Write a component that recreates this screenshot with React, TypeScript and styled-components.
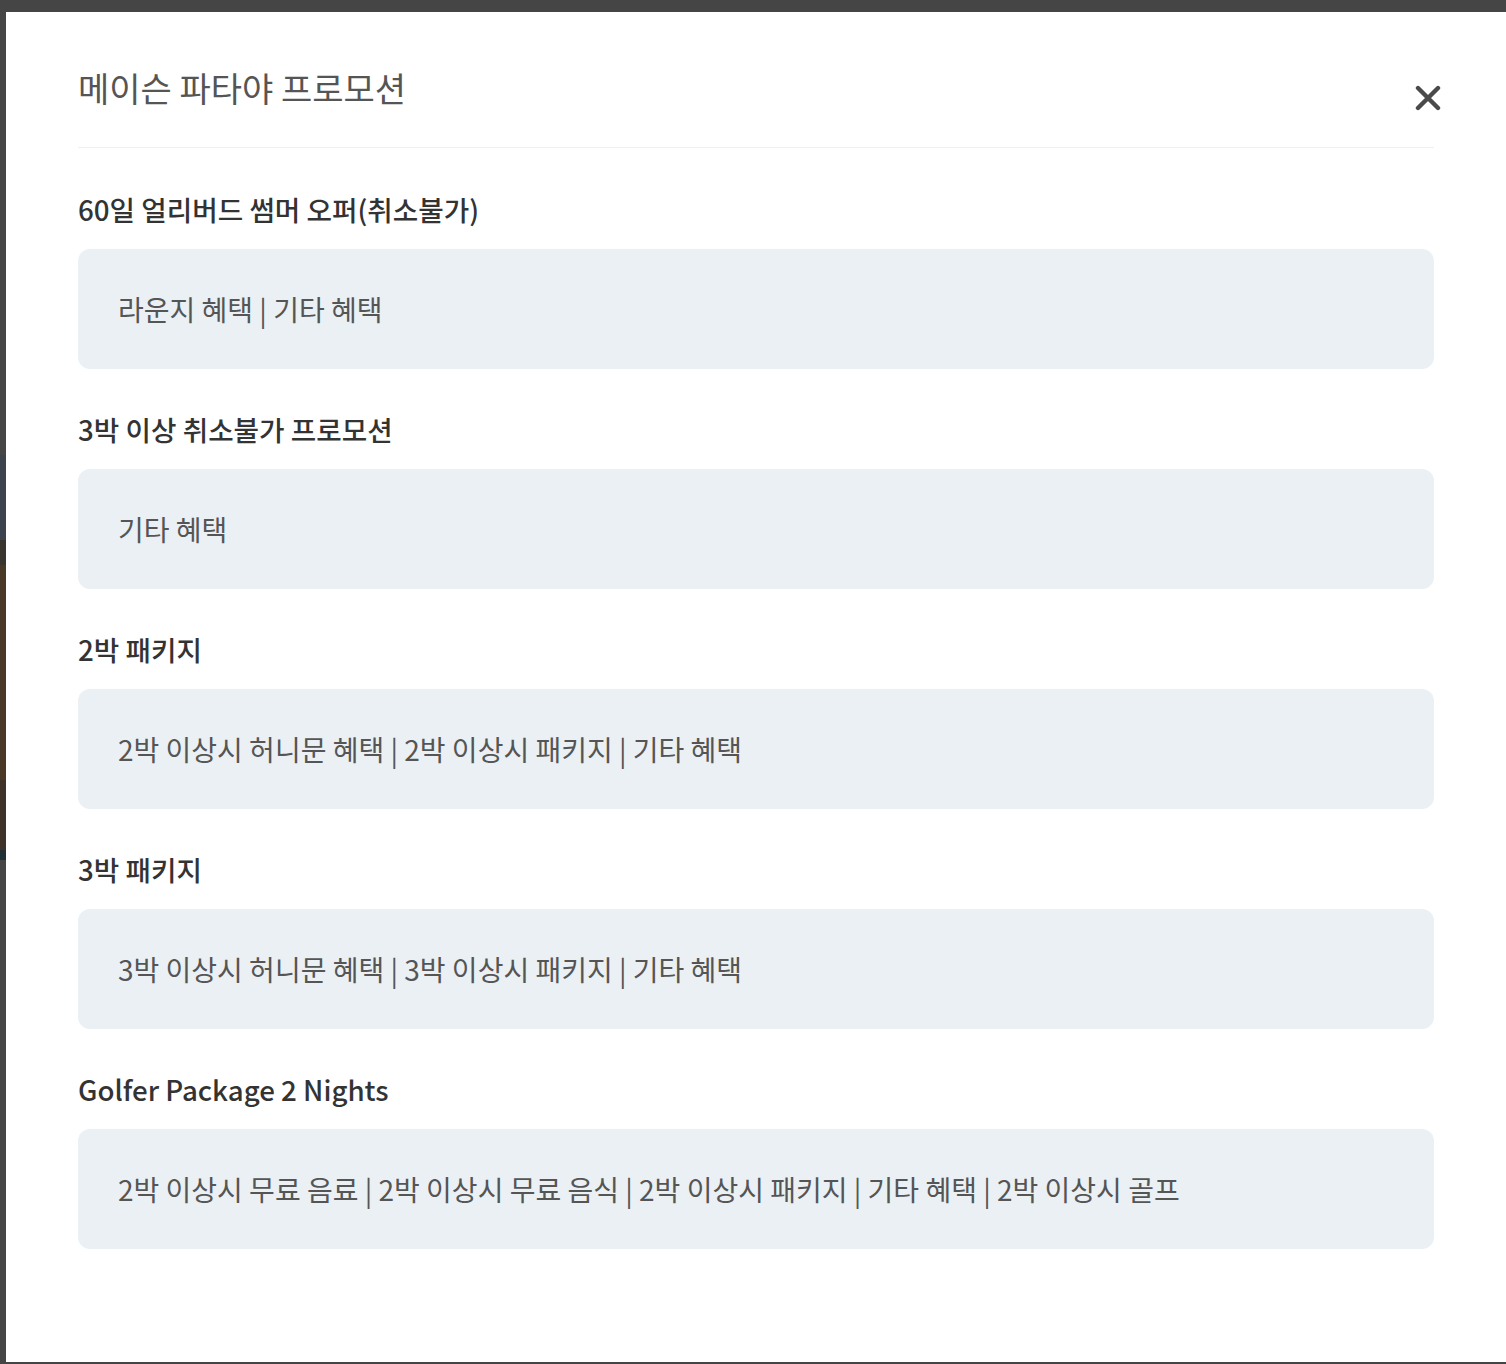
import React from 'react'
import styled, { createGlobalStyle } from 'styled-components'

const GlobalStyle = createGlobalStyle`
  html, body {
    margin: 0;
    padding: 0;
  }
  body {
    background: linear-gradient(
      to bottom,
      #454545 0px,
      #454545 455px,
      #3c434d 455px,
      #3c434d 540px,
      #3a342e 540px,
      #3a342e 565px,
      #4a3826 565px,
      #4a3826 780px,
      #3e3127 780px,
      #3e3127 850px,
      #1f2f33 850px,
      #1f2f33 860px,
      #454545 860px
    );
    font-family: 'Noto Sans CJK KR', 'Noto Sans', sans-serif;
  }
`

const Page = styled.div`
  width: 1506px;
  height: 1364px;
  padding: 12px 0 2px 6px;
  box-sizing: border-box;
`

const Modal = styled.div`
  width: 1500px;
  height: 1350px;
  background: #ffffff;
  padding: 0 72px;
  box-sizing: border-box;
  display: flex;
  flex-direction: column;
`

const Header = styled.div`
  display: flex;
  align-items: flex-start;
  justify-content: space-between;
  padding: 52px 0 35px;
  border-bottom: 1px solid #f0f0f0;
`

const Title = styled.h1`
  margin: 0;
  font-size: 34px;
  line-height: 48px;
  font-weight: 400;
  color: #555555;
`

const CloseButton = styled.button`
  width: 28px;
  height: 28px;
  margin-top: 20px;
  margin-right: -8px;
  padding: 0;
  border: 0;
  background: transparent;
  display: flex;
  align-items: center;
  justify-content: center;
  cursor: pointer;
`

const List = styled.div`
  display: flex;
  flex-direction: column;
  gap: 40px;
  padding-top: 41px;
`

const Section = styled.section`
  display: flex;
  flex-direction: column;
  gap: 20px;
`

const Heading = styled.h2`
  margin: 0;
  font-size: 27.7px;
  line-height: 40px;
  font-weight: 500;
  color: #333333;
`

const BenefitBox = styled.div`
  height: 120px;
  padding: 0 40px;
  box-sizing: border-box;
  border-radius: 12px;
  background: #ebf0f4;
  display: flex;
  align-items: center;
  font-size: 28px;
  font-weight: 400;
  color: #555555;
`

const promotions = [
  { title: '60일 얼리버드 썸머 오퍼(취소불가)', benefits: ['라운지 혜택', '기타 혜택'] },
  { title: '3박 이상 취소불가 프로모션', benefits: ['기타 혜택'] },
  { title: '2박 패키지', benefits: ['2박 이상시 허니문 혜택', '2박 이상시 패키지', '기타 혜택'] },
  { title: '3박 패키지', benefits: ['3박 이상시 허니문 혜택', '3박 이상시 패키지', '기타 혜택'] },
  {
    title: 'Golfer Package 2 Nights',
    benefits: ['2박 이상시 무료 음료', '2박 이상시 무료 음식', '2박 이상시 패키지', '기타 혜택', '2박 이상시 골프'],
  },
]

export default function App() {
  return (
    <>
      <GlobalStyle />
      <Page>
        <Modal>
          <Header>
            <Title>메이슨 파타야 프로모션</Title>
            <CloseButton aria-label="닫기">
              <svg width="26" height="26" viewBox="0 0 26 26">
                <path d="M3 3 L23 23 M23 3 L3 23" stroke="#4a4a4a" strokeWidth="4.4" strokeLinecap="round" />
              </svg>
            </CloseButton>
          </Header>
          <List>
            {promotions.map((p) => (
              <Section key={p.title}>
                <Heading>{p.title}</Heading>
                <BenefitBox>{p.benefits.join(' | ')}</BenefitBox>
              </Section>
            ))}
          </List>
        </Modal>
      </Page>
    </>
  )
}
